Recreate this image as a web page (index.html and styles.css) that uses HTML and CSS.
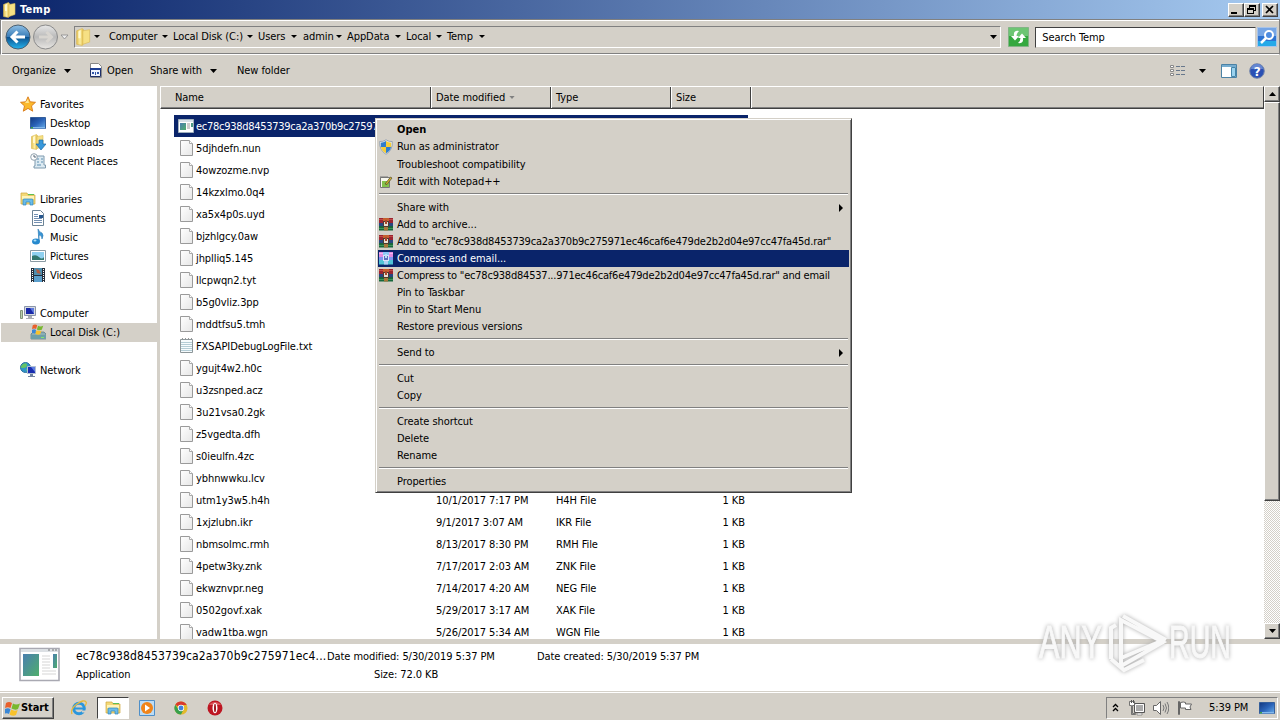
FILE: index.html
```
<!DOCTYPE html>
<html lang="en">
<head>
    <meta charset="UTF-8">
    <title>Temp</title>
    <link rel="stylesheet" href="styles.css">
</head>
<body>
    <!-- shared icons -->
    <svg class="defs" width="0" height="0">
        <defs>
            <linearGradient id="blue" x1="0" y1="0" x2="0" y2="1"><stop offset="0" stop-color="#8fc0e6"/><stop offset=".48" stop-color="#3a7db8"/><stop offset=".5" stop-color="#0b4f8d"/><stop offset="1" stop-color="#25b4ee"/></linearGradient>
            <linearGradient id="grey" x1="0" y1="0" x2="0" y2="1"><stop offset="0" stop-color="#e8e8e8"/><stop offset=".5" stop-color="#b9b9b9"/><stop offset="1" stop-color="#e9e7e3"/></linearGradient>
            <linearGradient id="page" x1="0" y1="0" x2="1" y2="1"><stop offset="0" stop-color="#fff"/><stop offset="1" stop-color="#e6e6e6"/></linearGradient>
            <linearGradient id="screen" x1="0" y1="0" x2="1" y2="1"><stop offset="0" stop-color="#12377f"/><stop offset=".5" stop-color="#2a63b8"/><stop offset="1" stop-color="#6bb0ec"/></linearGradient>
            <linearGradient id="app" x1="0" y1="0" x2="1" y2="1"><stop offset="0" stop-color="#4a7fb0"/><stop offset="1" stop-color="#4fae6c"/></linearGradient>
            <linearGradient id="gold" x1="0" y1="0" x2="1" y2="0"><stop offset="0" stop-color="#e5c152"/><stop offset=".5" stop-color="#fbeea2"/><stop offset="1" stop-color="#dfb640"/></linearGradient>
        </defs>
        <symbol id="folder" viewBox="0 0 16 16"><path d="M1.500 2.500l5-2 1 1v12l-1 2-5-1z" fill="url(#gold)" stroke="#d9b850" stroke-width=".6"/><path d="M7 2.500l6-1v11l-6 2z" fill="#f6e084" stroke="#dcbc58" stroke-width=".6"/><path d="M3 3l2-1v7H3z" fill="#fff8cf"/></symbol>
        <symbol id="libs" viewBox="0 0 16 16"><path d="M1 2h6l1 2h7v9H1z" fill="#f3d978" stroke="#cfa63c" stroke-width=".7"/><path d="M2 5h12v3H2z" fill="#fff4b8"/><path d="M8 3h6v1H8z" fill="#5cbf55"/><path d="M3 14V9q0-1 1-1h8q1 0 1 1v5h-3v-3H6v3z" fill="#6bbbe8" stroke="#2e87bd" stroke-width=".7"/></symbol>
        <symbol id="file" viewBox="0 0 16 18"><path d="M2.500 1.500h9l3 3v12h-12z" fill="url(#page)" stroke="#9a9a9a"/><path d="M11.500 1.500v3h3" fill="#fff" stroke="#aaa"/></symbol>
        <symbol id="text" viewBox="0 0 16 18"><path d="M2.500 2.500h12v13h-12z" fill="#f6fbfd" stroke="#8d9699"/><path d="M3 5.500h11M3 7.500h11M3 9.500h11M3 11.500h11M3 13.500h11" stroke="#b4cdd6"/><path d="M4 1.500h1M7 1.500h1M10 1.500h1M13 1.500h1" stroke="#999"/></symbol>
        <symbol id="exe" viewBox="0 0 16 14"><path d="M.5 .5h15v13H.5z" fill="#fff" stroke="#a0b0bd"/><path d="M1 1h14v2H1z" fill="#d7e1e8"/><path d="M2 4h6v7H2z" fill="url(#app)"/><path d="M9 5h3M9 7h3M9 9h3" stroke="#999"/><path d="M13 4h2v4h-2z" fill="#4c9b84"/></symbol>
        <symbol id="desktop" viewBox="0 0 16 16"><path d="M.5 2.500h15v11H.5z" fill="url(#screen)" stroke="#345e9b"/><path d="M1 12h14v1.500H1z" fill="#84b9ec"/><path d="M1 12h2v1.500H1z" fill="#3ea046"/></symbol>
        <symbol id="rar" viewBox="0 0 14 13"><path d="M0 0h14v5H0z" fill="#9c2430"/><path d="M0 1h14v1H0z" fill="#c04a48"/><path d="M0 5h14v3H0z" fill="#28457f"/><path d="M0 8h14v4.500H0z" fill="#17663b"/><path d="M0 10h14v1H0z" fill="#3d9458"/><path d="M4 0h6v3H4z" fill="#c4612f"/><path d="M4 3h6v6H4z" fill="#4a3c33"/><path d="M5 4h4v4H5z" fill="#eadfd0"/><path d="M6 2h2v4H6z" fill="#a9482f"/><path d="M5 9h4v3.500H5z" fill="#a8763a"/></symbol>
        <symbol id="rar-on" viewBox="0 0 14 13"><path d="M0 0h14v5H0z" fill="#e48ae0"/><path d="M0 1h14v1H0z" fill="#f5b6f0"/><path d="M0 5h14v3H0z" fill="#7f96f0"/><path d="M0 8h14v4.500H0z" fill="#4fc3d6"/><path d="M4 0h6v3H4z" fill="#8cc8f6"/><path d="M4 3h6v6H4z" fill="#dbe3fa"/><path d="M5 4h4v4H5z" fill="#5f70bc"/><path d="M6 2h2v4H6z" fill="#b9e0f8"/><path d="M5 9h4v3.500H5z" fill="#b0d0f4"/></symbol>
        <symbol id="flag" viewBox="0 0 16 16"><path d="M1 3q3-2 6 0l-1.500 5Q3 6.500 0 8z" fill="#e8602c"/><path d="M8 3.500q3 2 7 0L13 9q-3 1.500-6.500-.5z" fill="#78b82f"/><path d="M0 9q3-1.500 5.500.2L4 14q-2-1.500-5 0z" fill="#3a87d6"/><path d="M6.200 9.600q3 2 6.500.4L11 15q-3 1.500-6.500-.6z" fill="#f8c22c"/></symbol>
        <symbol id="down" viewBox="0 0 7 4"><path d="M0 0h7L3.500 4z"/></symbol>
    </svg>

    <div class="title-bar">
        <svg class="i16"><use href="#folder"/></svg>
        <span>Temp</span>
        <div class="title-buttons">
            <div class="tb"><svg width="12" height="10"><path d="M2 8h6v2H2z"/></svg></div>
            <div class="tb"><svg width="12" height="11"><path d="M4 1h7v2H4zM4 1h1v3H4zM10 1h1v6h-1zM9 6h2v1H9zM2 4h7v2H2zM2 4h1v6H2zM8 4h1v6H8zM2 9h7v1H2z"/></svg></div>
            <div class="tb last"><svg width="12" height="11"><path d="M3 2l7 7M10 2l-7 7" stroke="#000" stroke-width="1.700"/></svg></div>
        </div>
    </div>

    <div class="nav">
        <svg class="travel" width="68" height="28" viewBox="0 0 68 28">
            <circle cx="16" cy="14" r="12" fill="url(#blue)" stroke="#4a5f70"/>
            <path d="M23 14H10.500M15.500 8.500L10 14l5.500 5.500" fill="none" stroke="#fff" stroke-width="3"/>
            <circle cx="43.500" cy="14" r="12" fill="url(#grey)" stroke="#8b8b8b"/>
            <path d="M37 14h12M44.500 9l5 5-5 5" fill="none" stroke="#d8d5d0" stroke-width="3"/>
            <path d="M59 12h7l-3.500 4z" fill="#eee" stroke="#888" stroke-width=".8"/>
        </svg>
        <div class="address">
            <svg class="i18"><use href="#folder"/></svg>
            <span class="crumb c0"></span><span class="crumb c1">Computer</span><span class="crumb c2">Local Disk (C:)</span><span class="crumb c3">Users</span><span class="crumb c4">admin</span><span class="crumb c5">AppData</span><span class="crumb c6">Local</span><span class="crumb c7">Temp</span>
            <svg class="drop" width="7" height="4"><use href="#down"/></svg>
        </div>
        <svg class="refresh" width="21" height="20" viewBox="0 0 21 20"><path d="M.5 .5h20v19H.5z" fill="#35a83f" stroke="#82b486"/><path d="M1 1h19v8H1z" fill="#6dc573"/><path d="M11 4Q5 3 6 9H3l4 4.500L11 9H8.500q0-3 2.500-5z" fill="#fff"/><path d="M10 16q6 1 5-5h3l-4-4.500-4 4.500h2.500q0 3-2.500 5z" fill="#fff"/></svg>
        <div class="search">Search Temp</div>
        <svg class="go" width="20" height="20" viewBox="0 0 20 20"><path d="M.5 .5h19v19H.5z" fill="#2c72d2" stroke="#a9c4e8"/><path d="M1 1h18v8H1z" fill="#76a5e5"/><path d="M1 14h18v5H1z" fill="#26a9e8"/><circle cx="12" cy="8" r="4" fill="#4d8be0" stroke="#fff" stroke-width="2"/><path d="M9 11l-5 5" stroke="#fff" stroke-width="2.500"/></svg>
    </div>

    <div class="toolbar">
        <span class="organize">Organize</span><svg width="7" height="4"><use href="#down"/></svg>
        <svg class="open-icon" width="14" height="16" viewBox="0 0 14 16"><path d="M1.500 .5h8l3 3v11h-11z" fill="#fff" stroke="#888"/><path d="M1.500 5.500h10v8h-10z" fill="#eef3ff" stroke="#1c2e68"/><path d="M1 5h11v2H1z" fill="#1f3f92"/><path d="M3 9h2v2H3zM6 9h1v3H6zM8 9h2v2H8z" fill="#3155a8"/></svg>
        <span class="open">Open</span>
        <span class="share">Share with</span><svg width="7" height="4"><use href="#down"/></svg>
        <span class="new">New folder</span>
        <div class="tools">
            <svg width="16" height="14" viewBox="0 0 16 14"><path d="M.5 1.500h3v2h-3zM.5 5.500h3v2h-3zM.5 9.500h3v2h-3z" fill="#fff" stroke="#888"/><path d="M6 2.500h4M11 2.500h4M6 6.500h4M11 6.500h4M6 10.500h4M11 10.500h4" stroke="#68788c"/></svg>
            <svg class="views-drop" width="7" height="4"><use href="#down"/></svg>
            <svg class="pane" width="16" height="14" viewBox="0 0 16 14"><path d="M.5 .5h15v13H.5z" fill="#fff" stroke="#4b82a5"/><path d="M1 1h14v2H1z" fill="#76add0"/><path d="M10.500 3.500h4v9h-4z" fill="#9bd2ee" stroke="#4585a9"/></svg>
            <svg width="16" height="16" viewBox="0 0 16 16"><circle cx="8" cy="8" r="7.300" fill="#2a50b4" stroke="#7687aa"/><path d="M2 6a6 5 0 0 1 12 0z" fill="#6486d2"/><text x="4.800" y="12.500" class="qm">?</text></svg>
        </div>
    </div>

    <div class="content">
        <div class="sidebar">
            <div class="side top"><svg class="i16" viewBox="0 0 16 16"><path d="M8 .8l2.200 5 5.300.5-4 3.600 1.200 5.300L8 12.400l-4.700 2.800 1.200-5.300-4-3.600 5.300-.5z" fill="#fbb92d" stroke="#d87918" stroke-width=".9"/><path d="M8 3l1 4H5z" fill="#ffe694"/></svg>Favorites</div>
            <div class="side"><svg class="i16"><use href="#desktop"/></svg>Desktop</div>
            <div class="side"><svg class="i16" viewBox="0 0 16 16"><use href="#folder" width="16" height="16"/><path d="M9 6h4v4h3l-5 6-5-6h3z" fill="#3898db" stroke="#1d6ca8" stroke-width=".7"/></svg>Downloads</div>
            <div class="side"><svg class="i16" viewBox="0 0 16 16"><path d="M5 3h9v9h1.500v3H4v-2h1z" fill="#dceaf2" stroke="#7e9aae"/><path d="M7 6h2M11 6h2M7 9h2M11 9h2M7 12h4" stroke="#5c8eb0"/><circle cx="4" cy="4" r="3.300" fill="#fff" stroke="#92a2ae"/><path d="M4 2v2h2" fill="none" stroke="#567"/></svg>Recent Places</div>
            <div class="side top gap"><svg class="i16"><use href="#libs"/></svg>Libraries</div>
            <div class="side"><svg class="i16" viewBox="0 0 16 16"><path d="M2.500 .5h8l3 3v12h-11z" fill="#fff" stroke="#6d8496"/><path d="M4 4.500h4M4 6.500h4M4 8.500h8M4 10.500h8M4 12.500h8" stroke="#7390b2"/><path d="M9 5h4v3H9z" fill="#27588f"/></svg>Documents</div>
            <div class="side"><svg class="i16" viewBox="0 0 16 16"><path d="M8 0q1 3 4 4 2 2 0 6 0-4-3-4v6z" fill="#3a96d6" stroke="#2375b2" stroke-width=".6"/><ellipse cx="6" cy="12.500" rx="4" ry="3" fill="#2689ce"/><ellipse cx="5" cy="11.500" rx="1.500" ry="1" fill="#a9def8"/></svg>Music</div>
            <div class="side"><svg class="i16" viewBox="0 0 16 16"><path d="M.5 2.500h15v11H.5z" fill="#fff" stroke="#8b9ba4"/><path d="M2 4h12v8H2z" fill="#8fd0ef"/><path d="M2 8q4-2 7 1t5 0v3H2z" fill="#33786e"/></svg>Pictures</div>
            <div class="side"><svg class="i16" viewBox="0 0 16 16"><path d="M1 1h14v14H1z" fill="#252e3b"/><path d="M4 1h8v7H4z" fill="#4f8eae"/><path d="M4 9h8v6H4z" fill="#5b9fcc"/><path d="M6 2l3 1 2 4-4-1z" fill="#b55e45"/><path d="M2.500 2v13M13.500 2v13" stroke="#fff" stroke-dasharray="1 1"/></svg>Videos</div>
            <div class="side top gap"><svg class="i16" viewBox="0 0 16 16"><path d="M4.500 1.500h11v9h-11z" fill="#d7dbe3" stroke="#8a95a9"/><path d="M6 3h8v6H6z" fill="#1828a8"/><path d="M10 3h4v6z" fill="#5d79dc"/><path d="M8 11h4v2h2v1H6v-1h2z" fill="#a9adb5"/><path d="M.5 5.500h2v8h-2z" fill="#b9d2ae" stroke="#83937b"/></svg>Computer</div>
            <div class="side selected"><svg class="i16" viewBox="0 0 16 16"><path d="M1 10l2-2h11l2 2v5H1z" fill="#8badb5" stroke="#57777f" stroke-width=".7"/><path d="M1 11h15v4H1z" fill="#6e9fa8"/><path d="M11 13h3v1h-3z" fill="#83e86e"/><svg x="2" y="-1" width="12" height="12"><use href="#flag"/></svg></svg>Local Disk (C:)</div>
            <div class="side top gap"><svg class="i16" viewBox="0 0 16 16"><circle cx="5.500" cy="5.500" r="5" fill="#2f95c8" stroke="#296f9e"/><path d="M3 2q4-2 4 1T3 6 2 3zM6 7h3l-2 3z" fill="#64c364"/><path d="M7.500 4.500h8v7h-8z" fill="#182caf" stroke="#b1bed1"/><path d="M11 5h4v5z" fill="#5d7de2"/><path d="M10 12h3v2h2v1H8v-1h2z" fill="#6f82a0"/></svg>Network</div>
        </div>
        <div class="list">
            <div class="list-head">
                <div class="h-name">Name</div>
                <div class="h-date">Date modified <svg width="6" height="3" viewBox="0 0 7 4" fill="#808080"><path d="M0 0h7L3.500 4z"/></svg></div>
                <div class="h-type">Type</div>
                <div class="h-size">Size</div>
            </div>
            <div class="rows" id="rows"></div>
        </div>
        <div class="scrollbar">
            <div class="sb"><svg width="7" height="4"><path d="M0 4h7L3.500 0z"/></svg></div>
            <div class="thumb"></div>
            <div class="sb end"><svg width="7" height="4"><use href="#down"/></svg></div>
        </div>
    </div>

    <div class="details">
        <svg width="43" height="36" viewBox="0 0 43 36"><path d="M2 1.500h39v32H2z" fill="#fff" stroke="#a9a9b2" stroke-width="1.600"/><path d="M3 2h37v3H3z" fill="#dce0e4"/><path d="M30 3h2M34 3h2M37 3h2" stroke="#777"/><path d="M5 7h16v22H5z" fill="url(#app)"/><path d="M24 9h8M24 12h8M24 15h8M24 18h8M24 21h8M24 24h14M24 27h14" stroke="#d5d5d5"/><path d="M35 7h4v14h-4z" fill="url(#app)"/></svg>
        <div class="d-name"><p class="big">ec78c938d8453739ca2a370b9c275971ec4...</p><p>Application</p></div>
        <div class="d-date"><p>Date modified: 5/30/2019 5:37 PM</p><p class="d-size">Size: 72.0 KB</p></div>
        <div class="d-created"><p>Date created: 5/30/2019 5:37 PM</p></div>
    </div>

    <div class="taskbar">
        <div class="start"><svg class="i16"><use href="#flag"/></svg>Start</div>
        <div class="task"><svg class="i16" viewBox="0 0 16 16"><circle cx="8" cy="8.500" r="5.300" fill="none" stroke="#2b96dc" stroke-width="3"/><path d="M4 7.500h9.500v2H4z" fill="#2b96dc"/><path d="M11 10.500h5v2h-5z" fill="#d5d1c8"/><path d="M1 14Q-1 9 6 4t9-2q1 1-1 4" fill="none" stroke="#e7b93b" stroke-width="1.300"/></svg></div>
        <div class="task active"><svg class="i16"><use href="#libs"/></svg></div>
        <div class="task"><svg class="i16" viewBox="0 0 16 16"><path d="M.5 .5h15v15H.5z" fill="#bcdcf5" stroke="#4f8fc8"/><circle cx="8" cy="8" r="6" fill="#f08419"/><path d="M6 4.500l5 3.500-5 3.500z" fill="#fff"/></svg></div>
        <div class="task"><svg class="i14" viewBox="0 0 16 16"><circle cx="8" cy="8" r="7.500" fill="#e3b92c"/><path d="M8 8L1.500 4.200A7.500 7.500 0 0 1 14.500 4.500H8z" fill="#d8392e"/><path d="M1.500 4.200A7.500 7.500 0 0 0 8 15.500L11 9.500 5 9.800z" fill="#38a04c"/><circle cx="8" cy="8" r="3.600" fill="#fff"/><circle cx="8" cy="8" r="2.800" fill="#4180dc"/></svg></div>
        <div class="task"><svg class="i16" viewBox="0 0 16 16"><circle cx="8" cy="8" r="7.500" fill="#bd1622"/><path d="M2 5a7 6 0 0 1 12 0z" fill="#db565b"/><ellipse cx="8" cy="8" rx="2.500" ry="5.300" fill="#fff"/><ellipse cx="8" cy="8" rx="1" ry="4.300" fill="#9c151d"/></svg></div>
        <div class="tray">
            <svg width="7" height="9" viewBox="0 0 7 9"><path d="M1 4l2.500-2.500L6 4M1 8l2.500-2.500L6 8" fill="none" stroke="#000" stroke-width="1.300"/></svg>
            <svg class="net" width="16" height="16" viewBox="0 0 16 16"><path d="M5.500 3.500h10v9h-10z" fill="#aaa" stroke="#555"/><path d="M6.500 4.500h8v7h-8z" fill="none" stroke="#fff"/><path d="M8 13h5v2H8z" fill="#fff" stroke="#666" stroke-width=".6"/><path d="M.5 1.500h5v4h-2v8h3v1h-4v-9h-2z" fill="#fff" stroke="#555" stroke-width=".8"/><path d="M2.500 0v3M4.500 0v3" stroke="#555"/></svg>
            <svg width="16" height="16" viewBox="0 0 16 16"><path d="M.5 5.500h3l4-4v13l-4-4h-3z" fill="#fff" stroke="#666"/><path d="M10 5q2 3 0 6M12 3.500q3 4.500 0 9M14 2q3.500 6 0 12" fill="none" stroke="#777"/></svg>
            <svg width="16" height="16" viewBox="0 0 16 16"><path d="M1.500 1.500h1v13h-1z" fill="#fff" stroke="#666"/><path d="M3.500 2.500q3-1 5 0v1.500h6l-1.500 3 1 2.500H8.500V8h-5z" fill="#fff" stroke="#666"/></svg>
            <span>5:39 PM</span>
            <svg class="i16"><use href="#desktop"/></svg>
        </div>
    </div>

    <div class="menu">
        <div class="item bold">Open</div>
        <div class="item tall"><svg width="14" height="16" viewBox="0 0 14 16"><path d="M7 .8Q10 3 13.300 2.500 14 11 7 15.300 0 11 .7 2.500 4 3 7 .8z" fill="#e8edf2" stroke="#8797a8" stroke-width=".8"/><path d="M7 2v6H1.800L1.800 3.700Q4.500 3.700 7 2zM7 8h5Q11.500 12 7 14.200z" fill="#2f7dcc"/><path d="M7 2v6h5.200V3.700Q9.500 3.700 7 2zM7 8H2Q2.500 12 7 14.200z" fill="#f5cd38"/></svg>Run as administrator</div>
        <div class="item">Troubleshoot compatibility</div>
        <div class="item"><svg width="14" height="14" viewBox="0 0 14 14"><path d="M1.500 2.500h9v10h-9z" fill="#f8f8ee" stroke="#777"/><path d="M3 6h7v6H3z" fill="#84c24b"/><path d="M2 1v2M4 1v2M6 1v2M8 1v2" stroke="#777"/><path d="M6 9l5.500-7L13 3 8 9.500z" fill="#d2b12d" stroke="#514a2c" stroke-width=".7"/></svg>Edit with Notepad++</div>
        <div class="sep"></div>
        <div class="item sub">Share with</div>
        <div class="item"><svg width="14" height="13"><use href="#rar"/></svg>Add to archive...</div>
        <div class="item long"><svg width="14" height="13"><use href="#rar"/></svg>Add to "ec78c938d8453739ca2a370b9c275971ec46caf6e479de2b2d04e97cc47fa45d.rar"</div>
        <div class="item on"><svg width="14" height="13"><use href="#rar-on"/></svg>Compress and email...</div>
        <div class="item long"><svg width="14" height="13"><use href="#rar"/></svg>Compress to "ec78c938d84537...971ec46caf6e479de2b2d04e97cc47fa45d.rar" and email</div>
        <div class="item">Pin to Taskbar</div>
        <div class="item">Pin to Start Menu</div>
        <div class="item">Restore previous versions</div>
        <div class="sep"></div>
        <div class="item sub">Send to</div>
        <div class="sep"></div>
        <div class="item">Cut</div>
        <div class="item">Copy</div>
        <div class="sep"></div>
        <div class="item">Create shortcut</div>
        <div class="item">Delete</div>
        <div class="item">Rename</div>
        <div class="sep"></div>
        <div class="item">Properties</div>
    </div>

    <svg class="watermark" width="204" height="74" viewBox="0 0 204 74">
        <text x="5" y="54" textLength="63" lengthAdjust="spacingAndGlyphs">ANY</text>
        <path d="M77 55V24l5-3M87 62V16l42 22-42 24M87 54l38-16M89 12l43 24M77 55l13 11 20-10" />
        <text x="135" y="54" textLength="62" lengthAdjust="spacingAndGlyphs">RUN</text>
    </svg>

    <script>
        const files = [
            ["ec78c938d8453739ca2a370b9c27597"], ["5djhdefn.nun"], ["4owzozme.nvp"], ["14kzxlmo.0q4"],
            ["xa5x4p0s.uyd"], ["bjzhlgcy.0aw"], ["jhplliq5.145"], ["llcpwqn2.tyt"], ["b5g0vliz.3pp"],
            ["mddtfsu5.tmh"], ["FXSAPIDebugLogFile.txt"], ["ygujt4w2.h0c"], ["u3zsnped.acz"],
            ["3u21vsa0.2gk"], ["z5vgedta.dfh"], ["s0ieulfn.4zc"], ["ybhnwwku.lcv"],
            ["utm1y3w5.h4h", "10/1/2017 7:17 PM", "H4H File", "1 KB"],
            ["1xjzlubn.ikr", "9/1/2017 3:07 AM", "IKR File", "1 KB"],
            ["nbmsolmc.rmh", "8/13/2017 8:30 PM", "RMH File", "1 KB"],
            ["4petw3ky.znk", "7/17/2017 2:03 AM", "ZNK File", "1 KB"],
            ["ekwznvpr.neg", "7/14/2017 4:20 AM", "NEG File", "1 KB"],
            ["0502govf.xak", "5/29/2017 3:17 AM", "XAK File", "1 KB"],
            ["vadw1tba.wgn", "5/26/2017 5:34 AM", "WGN File", "1 KB"]
        ];

        document.getElementById("rows").innerHTML = files.map(([name, date = "", type = "", size = ""], i) => {
            const icon = i === 0 ? "exe" : name.endsWith(".txt") ? "text" : "file";
            return `<div class="row${i === 0 ? " picked" : ""}">
                <svg class="${icon}"><use href="#${icon}"/></svg>
                <span class="name">${name}</span><span class="date">${date}</span>
                <span class="type">${type}</span><span class="size">${size}</span>
            </div>`;
        }).join("");
    </script>
</body>
</html>
```
FILE: styles.css
```
* {
    box-sizing: border-box;
}
body {
    margin: 0;
    width: 1280px;
    height: 720px;
    overflow: hidden;
    display: flex;
    flex-direction: column;
    position: relative;
    background: #d4d0c8;
    color: #000;
    font: 11px/17px "DejaVu Sans Condensed", "DejaVu Sans", sans-serif;
    font-stretch: condensed;
    letter-spacing: -0.08px;
    white-space: nowrap;
}
svg {
    display: block;
    flex: none;
}
p {
    margin: 0;
}
.defs {
    position: absolute;
}
.i14 {
    width: 14px;
    height: 14px;
}
.i16 {
    width: 16px;
    height: 16px;
}
.i18 {
    width: 18px;
    height: 18px;
}

/* title bar */
.title-bar {
    height: 19px;
    flex: none;
    display: flex;
    align-items: center;
    padding: 0 2px;
    background: linear-gradient(90deg, #0a246a, #a6caf0);
    color: #fff;
    font-weight: bold;
    letter-spacing: 0.3px;
}
.title-bar span {
    margin-left: 2px;
    padding-bottom: 1px;
}
.title-buttons {
    margin-left: auto;
    display: flex;
}
.tb {
    width: 16px;
    height: 14px;
    display: flex;
    background: #d4d0c8;
    border: 1px solid;
    border-color: #fff #404040 #404040 #fff;
    box-shadow: inset -1px -1px #808080;
}
.tb.last {
    margin-left: 2px;
}

/* address row */
.nav {
    height: 36px;
    flex: none;
    display: flex;
    align-items: center;
    padding: 0 2px 0 1px;
    border: 1px solid #808080;
    border-bottom-color: #fff;
    box-shadow: inset 0 1px #fff, inset 1px 0 #fff, inset 0 -1px #808080;
}
.travel {
    margin-right: 4px;
}
.address {
    width: 929px;
    height: 22px;
    display: flex;
    align-items: center;
    border: 1px solid;
    border-color: #808080 #fff #fff #808080;
}
.crumb {
    display: flex;
    align-items: center;
    justify-content: space-between;
    line-height: 17px;
    padding-bottom: 1px;
}
.crumb::after {
    content: "";
    border: 3px solid transparent;
    border-top-color: #000;
    border-bottom: 0;
}
.c0 { width: 10px; margin-left: 1px; }
.c1 { width: 59px; margin-left: 5px; }
.c2 { width: 80px; margin-left: 5px; }
.c3 { width: 39px; margin-left: 5px; }
.c4 { width: 39px; margin-left: 6px; }
.c5 { width: 54px; margin-left: 5px; }
.c6 { width: 36px; margin-left: 5px; }
.c7 { width: 38px; margin-left: 5px; }
.drop {
    margin-left: auto;
    margin-right: 3px;
}
.refresh {
    margin: 0 4px 0 7px;
}
.search {
    width: 221px;
    height: 21px;
    margin-left: 2px;
    padding: 1px 6px;
    background: #fff;
    border: 1px solid;
    border-color: #404040 #d4d0c8 #d4d0c8 #404040;
}
.go {
    margin-left: 1px;
}

/* command bar */
.toolbar {
    height: 31px;
    flex: none;
    display: flex;
    align-items: center;
    padding-left: 12px;
}
.organize { width: 52px; }
.open-icon { margin: 0 4px 0 18px; }
.open { width: 43px; }
.share { width: 60px; }
.new { margin-left: 20px; }
.tools {
    margin-left: auto;
    margin-right: 15px;
    display: flex;
    align-items: center;
}
.views-drop { margin: 0 15px 0 13px; }
.pane { margin-right: 12px; }
.qm {
    font: bold 12px "DejaVu Sans", sans-serif;
    fill: #fff;
}

/* main area */
.content {
    height: 553px;
    flex: none;
    display: flex;
    background: #fff;
}
.sidebar {
    width: 160px;
    padding-top: 9px;
    border-right: 3px solid #d4d0c8;
}
.side {
    height: 19px;
    display: flex;
    align-items: center;
    gap: 4px;
    padding-left: 30px;
    line-height: 19px;
}
.side svg {
    margin-top: -2px;
}
.side.top {
    padding-left: 20px;
}
.side.gap {
    margin-top: 19px;
}
.side.selected {
    margin-left: 1px;
    padding-left: 29px;
    background: #d4d0c8;
}
.list {
    width: 1104px;
    overflow: hidden;
}
.list-head {
    height: 23px;
    display: flex;
    background: #d4d0c8;
    line-height: 22px;
    border: 1px solid;
    border-color: #fff #404040 #404040 #fff;
    box-shadow: inset 0 -1px #808080;
}
.list-head div {
    border-right: 1px solid #404040;
    box-shadow: 1px 0 #fff;
    height: 21px;
}
.h-name { width: 270px; padding-left: 14px; }
.h-date { width: 120px; padding-left: 5px; display: flex; align-items: center; gap: 4px; }
.h-type { width: 120px; padding-left: 5px; }
.h-size { width: 80px; padding-left: 5px; }
.rows {
    padding: 6px 0 0 14px;
}
.row {
    width: 574px;
    height: 22px;
    display: flex;
    align-items: center;
}
.row svg {
    width: 16px;
    height: 18px;
    margin: -1px 2px 0 4px;
}
.row .exe {
    height: 14px;
}
.row.picked {
    background: #0a246a;
    color: #fff;
    letter-spacing: -0.28px;
}
.name { width: 240px; }
.date { width: 120px; }
.type { width: 119px; }
.size { width: 70px; text-align: right; }

.scrollbar {
    width: 16px;
    display: flex;
    flex-direction: column;
    background: repeating-conic-gradient(#fff 0 25%, #d4d0c8 0 50%) 0 0 / 2px 2px;
}
.sb, .thumb, .start {
    background: #d4d0c8;
    border: 1px solid;
    border-color: #fff #404040 #404040 #fff;
    box-shadow: inset -1px -1px #808080;
}
.sb {
    height: 16px;
    display: flex;
    align-items: center;
    justify-content: center;
}
.thumb {
    height: 399px;
}
.sb.end {
    margin-top: auto;
}

/* details pane */
.details {
    height: 53px;
    flex: none;
    display: flex;
    padding: 3px 0 0 18px;
    background: #fff;
    border-top: 5px solid #d4d0c8;
    border-bottom: 1px solid #d4d0c8;
}
.details p {
    height: 18px;
    line-height: 19px;
}
.d-name { width: 251px; margin-left: 15px; }
.d-date { width: 210px; }
.d-size { padding-left: 47px; }
.details .big {
    font-size: 12px;
    letter-spacing: 0.14px;
}

/* taskbar */
.taskbar {
    height: 28px;
    flex: none;
    display: flex;
    align-items: center;
    padding: 2px 2px 0;
    border-top: 1px solid #fff;
}
.start {
    width: 52px;
    height: 22px;
    margin-right: 9px;
    padding-left: 2px;
    display: flex;
    align-items: center;
    font-weight: bold;
}
.task {
    width: 32px;
    height: 22px;
    margin-right: 2px;
    display: flex;
    align-items: center;
    justify-content: center;
}
.task.active {
    background: #fff;
    border: 1px solid;
    border-color: #404040 #fff #fff #404040;
}
.tray {
    width: 172px;
    height: 22px;
    margin-left: auto;
    padding: 0 2px 0 5px;
    display: flex;
    align-items: center;
    gap: 8px;
    border: 1px solid;
    border-color: #808080 #fff #fff #808080;
}
.tray span {
    width: 43px;
    margin: 0 3px 0 8px;
}
.net { margin-left: 2px; }

/* context menu */
.menu {
    position: absolute;
    left: 375px;
    top: 118px;
    width: 477px;
    height: 375px;
    padding: 2px;
    background: #d4d0c8;
    border: 1px solid;
    border-color: #d4d0c8 #404040 #404040 #d4d0c8;
    box-shadow: inset 1px 1px #fff, inset -1px -1px #808080;
}
.item {
    height: 17px;
    display: flex;
    align-items: center;
    padding-left: 19px;
    line-height: 16px;
}
.item svg {
    margin-left: -18px;
    margin-right: 4px;
}
.item.tall {
    height: 18px;
    line-height: 18px;
}
.item.bold {
    font-weight: bold;
    letter-spacing: 0;
}
.item.long {
    letter-spacing: -0.21px;
}
.item.on {
    background: #0a246a;
    color: #fff;
}
.sub {
    justify-content: space-between;
    padding-right: 6px;
}
.sub::after {
    content: "";
    border: 4px solid transparent;
    border-left-color: #000;
    border-right: 0;
}
.sep {
    height: 2px;
    margin: 3px 1px 4px;
    border-top: 1px solid #808080;
    border-bottom: 1px solid #fff;
}

.watermark {
    position: absolute;
    left: 1034px;
    top: 604px;
    overflow: visible;
    filter: drop-shadow(0 0 2px #aaa);
}
.watermark text {
    font: 46px "Liberation Sans", sans-serif;
    letter-spacing: 0;
    fill: #f8f8f8;
    stroke: #f8f8f8;
}
.watermark path {
    fill: none;
    stroke: #f8f8f8;
    stroke-width: 4;
}
```
